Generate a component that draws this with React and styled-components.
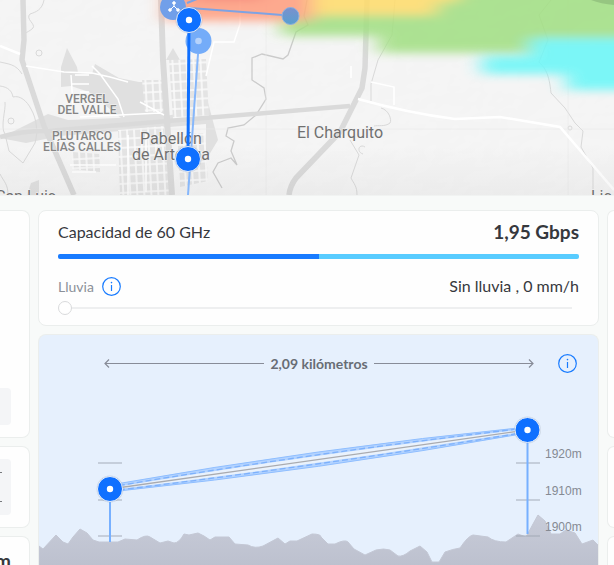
import React, { useState } from 'react';
import styled, { createGlobalStyle } from 'styled-components';

const GlobalStyle = createGlobalStyle`
  *, *::before, *::after { box-sizing: border-box; }
  body { margin: 0; background: #f8faf9; font-family: Lato, "Open Sans", sans-serif; color: #36383d; }
`;

const Page = styled.div`
  display: flex;
  flex-direction: column;
  height: 100vh;
  overflow: hidden;
`;

const MapView = styled.section`
  flex: none;
  overflow: hidden;
  background: #f3f3f3;

  svg { display: block; width: 100%; height: auto; }
`;

const MapLabel = styled.text`
  font-family: Roboto, sans-serif;
  font-size: ${(p) => (p.$district ? 12 : 16)}px;
  font-weight: ${(p) => (p.$district ? 500 : 400)};
  fill: ${(p) => (p.$district ? '#858585' : '#707070')};
  stroke: #f5f5f5;
  stroke-width: 1px;
  paint-order: stroke;
  text-anchor: ${(p) => p.$anchor || 'middle'};
`;

const Panel = styled.main`
  flex: 1;
  min-height: 0;
  display: grid;
  grid-template-columns: 30px minmax(0, 1fr) 7px;
  gap: 8px;
  padding-top: 14px;
  border-top: 1px solid #f1f3f2;
  background: #f8faf9;
`;

const Column = styled.div`
  display: flex;
  flex-direction: column;
  gap: 8px;
  min-width: 0;
  min-height: 0;
`;

const Card = styled.section`
  border: 1px solid #ebeeed;
  border-radius: 8px;
  background: #fefefe;
`;

const SideCard = styled(Card)`
  flex: ${(p) => (p.$fill ? '1' : 'none')};
  height: ${(p) => (p.$height ? `${p.$height}px` : 'auto')};
  display: flex;
  flex-direction: column;
  justify-content: ${(p) => (p.$center ? 'center' : p.$fill ? 'flex-start' : 'flex-end')};
  padding: 12px 0;
  border-left-width: ${(p) => (p.$side === 'left' ? 0 : 1)}px;
  border-right-width: ${(p) => (p.$side === 'left' ? 1 : 0)}px;
  border-bottom-width: ${(p) => (p.$fill ? 0 : 1)}px;
  border-radius: ${(p) => (p.$side === 'left' ? '0 8px 8px 0' : '8px 0 0 8px')};
  border-bottom-left-radius: ${(p) => (p.$fill ? '0' : null)};
  border-bottom-right-radius: ${(p) => (p.$fill ? '0' : null)};
  overflow: hidden;
`;

const Field = styled.div`
  display: flex;
  flex-direction: column;
  justify-content: space-between;
  width: 11px;
  height: ${(p) => p.$height}px;
  padding: 13px 0;
  border-radius: 0 4px 4px 0;
  background: #f4f5f7;
`;

const Dash = styled.span`
  width: 2px;
  height: 1px;
  background: #77797d;
`;

const Unit = styled.strong`
  display: flex;
  justify-content: flex-end;
  width: 11px;
  font-size: 19px;
  line-height: 24px;
`;

const CapacityCard = styled(Card)`
  display: flex;
  flex-direction: column;
  padding: 9px 19px 7px;
`;

const Row = styled.div`
  display: flex;
  align-items: center;
  justify-content: space-between;
  height: 24px;
`;

const Title = styled.h2`
  margin: 0;
  font-size: 16px;
  font-weight: 400;
  line-height: 24px;
`;

const Rate = styled.strong`
  font-size: 19px;
  font-weight: 700;
  line-height: 24px;
`;

const CapacityBar = styled.div`
  display: flex;
  height: 5px;
  margin: 10px 0 15px;
  border-radius: 2px;
  overflow: hidden;
`;

const Segment = styled.span`
  flex: 1;
  background: ${(p) => p.$color};
`;

const RainLabel = styled.div`
  display: flex;
  align-items: center;
  gap: 8px;
  font-size: 14px;
  color: #8b9099;
`;

const Value = styled.output`
  font-size: 16px;
  line-height: 24px;
`;

const InfoButton = styled.button`
  display: flex;
  padding: 0;
  border: 0;
  background: none;
  cursor: pointer;
`;

const Slider = styled.input`
  appearance: none;
  width: 100%;
  height: 20px;
  margin: 0;
  background: linear-gradient(#eeeff0, #eeeff0) center / calc(100% - 14px) 2px no-repeat;
  cursor: pointer;

  &::-webkit-slider-thumb {
    appearance: none;
    width: 14px;
    height: 14px;
    border: 1px solid #d9dadc;
    border-radius: 50%;
    background: #fff;
  }
`;

const ProfileCard = styled(Card)`
  flex: 1;
  min-height: 0;
  display: flex;
  flex-direction: column;
  border-bottom: 0;
  border-radius: 8px 8px 0 0;
  background: #e6f0fd;
  overflow: hidden;
`;

const ProfileHeader = styled.header`
  flex: none;
  display: flex;
  align-items: center;
  gap: 24px;
  padding: 19px 21px 0 65px;
`;

const Distance = styled.div`
  flex: 1;
  display: flex;
  align-items: center;
  gap: 6px;
  font-size: 14px;
  font-weight: 700;
  line-height: 18px;
  color: #686d75;
`;

const ArrowLine = styled.span`
  flex: 1;
  display: flex;
  align-items: center;
  flex-direction: ${(p) => (p.$right ? 'row' : 'row-reverse')};

  &::before {
    content: "";
    flex: 1;
    height: 1px;
    background: #888c98;
  }

  svg { flex: none; margin: ${(p) => (p.$right ? '0 0 0 -7px' : '0 -7px 0 0')}; }
`;

const ProfileChart = styled.svg`
  flex: none;
  display: block;
  width: 100%;
  height: auto;
`;

const AltitudeText = styled.text`
  font-family: "Liberation Sans", Arial, sans-serif;
  font-size: 12px;
  fill: #858a93;
`;

function Info({ label }) {
  return (
    <InfoButton type="button" aria-label={label}>
      <svg width="19" height="19" viewBox="0 0 19 19" fill="none" stroke="#187bff">
        <circle cx="9.5" cy="9.5" r="8.8" strokeWidth="1.2" />
        <path d="M9.5 8v6" strokeWidth="1.2" />
        <circle cx="9.5" cy="5.6" r=".8" fill="#187bff" stroke="none" />
      </svg>
    </InfoButton>
  );
}

function ArrowHead({ right }) {
  return (
    <svg width="8" height="9" viewBox="0 0 8 9" fill="none" stroke="#888c98" strokeWidth="1.2">
      <path d={right ? 'M3 .5l4 4-4 4' : 'M5 .5l-4 4 4 4'} />
    </svg>
  );
}

function Node({ x, y }) {
  return (
    <g transform={`translate(${x} ${y})`}>
      <circle r="13.5" fill="#8c98a8" opacity=".25" />
      <circle r="12.5" fill="#0f70ff" stroke="#e8effa" />
      <circle r="3.2" fill="#fff" />
    </g>
  );
}

function CoverageMap() {
  return (
    <MapView aria-label="Mapa">
      <svg viewBox="0 0 614 195" role="group">
        <defs>
          <pattern id="blocks" width="7" height="9" patternUnits="userSpaceOnUse" patternTransform="rotate(-3)">
            <rect width="7" height="9" fill="#e4e4e4" />
            <path d="M0 1h7M1 0v9" stroke="#fbfbfb" strokeWidth="1.6" />
          </pattern>
          <filter id="soft" x="-20%" y="-60%" width="140%" height="220%"><feGaussianBlur stdDeviation="10 5" /></filter>
          <filter id="relief" x="0" y="0" width="100%" height="100%">
            <feTurbulence type="fractalNoise" baseFrequency=".025 .035" numOctaves="3" seed="8" />
            <feDiffuseLighting surfaceScale="1.3" lightingColor="#fff"><feDistantLight azimuth="225" elevation="65" /></feDiffuseLighting>
          </filter>
          <linearGradient id="fade" x2="0" y2="1"><stop offset=".75" stopColor="#777" stopOpacity="0" /><stop offset="1" stopColor="#777" stopOpacity=".07" /></linearGradient>
          <linearGradient id="far" x2="0" y2="1"><stop stopColor="#7b90cd" /><stop offset="1" stopColor="#58a0d0" /></linearGradient>
        </defs>
        <rect width="614" height="195" fill="#f5f5f5" />
        <rect width="614" height="195" filter="url(#relief)" opacity=".11" />

        <g fill="#e0e0e0">
          <path d="M61 67l6-19 10 19 1 6 14 1 3-10 24 14 20 4 24 0 2 38-44-2-32-26-18-6-10 1z" />
          <path d="M0 138l20-10 28-14 20 6 98-4 40-8v16L60 136l-34 7z" />
          <path d="M27 195l4-12 8-3v15zM206 95l12 45-12 20zM166 60l7-12 7 12z" />
        </g>
        <path d="M142 80l22 0 3 32-22 0zM169 60l37-1 3 58-36 2zM118 130l46-4 6 69-50 0-1-30zM72 152l28 2 0 18-28-3zM177 135l28-2 3 48-28 6z" fill="url(#blocks)" />
        <g fill="none" stroke="#d9d9d9" strokeWidth="1">
          <path d="M44 0c-2 10-8 12-14 14-5 5 6 10 3 14-3 3-6 4-9 6" />
          <circle cx="39" cy="53" r="3" />
          <circle cx="11" cy="121" r="3" />
          <path d="M0 62c8 2 16 2 22 12M0 86c8 1 12 5 13 11 7-2 14 4 18 12 6 10 7 24 4 34l-12 20-14-12-4-17C0 127 6 110 5 102M0 174c4 8 8 10 8 21" />
          <path d="M395 0l-3 35-14 25-7 24v17M381 108c8 2 11 12 9 15-5 4-12 2-16 3M350 140l9 15-8 23c3 6 6 8 6 17M365 147c-6-4-9 5-2 7" />
          <path d="M307 0l-3 16 4 9-12 7-8 23-5 4-21-5-10 4v22l12 8 2 11-10 16-12 10-16 3-2 8 8 5-3 10 6 14-6-7-13 5-5 9 9 16" stroke="#cbcbcb" strokeWidth="1.3" />
          <path d="M551 0l-12 15 9 25-9 22c6 6 10 11 12 31l14 15 10 15 8 8-2 16 12 21v27" />
          <circle cx="570" cy="128" r="2" />
        </g>
        <g stroke="#e8e8e8" strokeWidth="1"><path d="M0 129h614M568 0v195M266 0v195" opacity=".6" /></g>
        <g fill="none" stroke="#dadada" strokeWidth="5.5" strokeLinejoin="round">
          <path d="M23 0l1 40-2 20 8 24 14 42 30 69" />
          <path d="M0 137q20-6 48-6l120-10 182-15" strokeWidth="4.5" />
          <path d="M161 0l2 60 9 135" strokeWidth="6" />
          <path d="M367 0l-2 68-3 20-22 44-44 46q-6 8-7 17" />
        </g>
        <g fill="none" stroke="#fff" strokeWidth="1.5">
          <path d="M0 46l20 8" strokeWidth="2.5" />
          <path d="M26 66l38 6 28 1 18 4 18 5M92 66l8 8 18 25 6 18M71 75l2 30M71 84h18M80 92h9M75 75h14M80 117l80-4M140 102l24 13M206 76l8-34h20l6-18V0M351 66v12" />
          <path d="M70 165h46M72 172h24M128 135v60M146 132v60" />
          <path d="M358 99q50 14 97 20l45-2 60 10 54 63" strokeWidth="2.5" />
          <path d="M371 82l23 5v18" />
        </g>
        <rect width="614" height="195" fill="url(#fade)" />

        <g filter="url(#soft)" opacity=".86">
          <path d="M274-30h390V70H560V53H378V36H282z" fill="#a1df82" />
          <path d="M300-30h158V2H436V15H310z" fill="#ffdc6b" />
          <path d="M166-30H312V21H166z" fill="#ff9d7e" />
          <path d="M195-30h65V-1h-65z" fill="#f26b62" />
          <path d="M530 38h134v52h-98V74h-84v-18h48z" fill="#67f7f8" />
        </g>
        <path d="M591 0q10 4 23 5V0z" fill="#96c681" />

        <MapLabel $district x="87" y="103">VERGEL</MapLabel>
        <MapLabel $district x="87" y="114">DEL VALLE</MapLabel>
        <MapLabel $district x="82" y="140">PLUTARCO</MapLabel>
        <MapLabel $district x="82" y="151">ELÍAS CALLES</MapLabel>
        <MapLabel x="171" y="144">Pabellón</MapLabel>
        <MapLabel x="171" y="160">de Arteaga</MapLabel>
        <MapLabel x="340" y="138">El Charquito</MapLabel>
        <MapLabel x="26" y="202">San Luis</MapLabel>
        <MapLabel x="591" y="202" $anchor="start">Lic</MapLabel>

        <path d="M187 3l10-4M190 8l92 7" stroke="#7ea3e3" strokeWidth="2" />
        <path d="M198 54l-10 141" stroke="#86b7fb" strokeWidth="2" />
        <circle cx="173" cy="7" r="13" fill="#719fe9" />
        <g fill="#fff" stroke="#fff">
          <path d="M170 10l4-4 4 4M174 3v3" fill="none" strokeWidth="1" />
          <circle cx="174" cy="3" r="1.3" /><circle cx="170" cy="10" r="1.3" /><circle cx="178" cy="10" r="1.3" />
        </g>
        <circle cx="290.5" cy="16" r="8.5" fill="url(#far)" stroke="#8eb0df" />
        <circle cx="198.5" cy="41" r="13" fill="#74acf9" />
        <circle cx="198.5" cy="41" r="3.3" fill="#b6d3fb" />
        <path d="M189 30l-1 120" stroke="#0f70ff" strokeWidth="3" />
        <Node x={189} y={20} />
        <Node x={188} y={159} />
      </svg>
    </MapView>
  );
}

const levels = [
  { y: 463, label: '1920m' },
  { y: 500, label: '1910m' },
  { y: 536, label: '1900m' },
];

function ElevationProfile() {
  return (
    <ProfileChart viewBox="39 373 559 200" role="group">
      <defs>
        <linearGradient id="ground" x2="0" y2="1"><stop stopColor="#c8ccd9" /><stop offset="1" stopColor="#b8bcca" /></linearGradient>
      </defs>
      <path
        d="M39 546l4 3 13-14 7 7 5 2 5-7 7-8 7 4 6 7 6 2h19l7-3 12 1q9-6 13-3l10 6 8-2 6 2q5 0 10-9l5 1 9-2 6 3 6 4 5-3h14l6 7 13 1q7 4 15 1l15-8 7 6 5-3h7l15-7q9 0 9 3l7 7h7q10-5 13-2l6 7 11 6 11-5q8-2 14 0l8 6q5 1 12-5l10-5 7 6 5 10h7l6-10q8-3 15-4 8-12 13-13l15 2q6 5 18 5l12-8 8 3 7-13 5-9 7 6 6 13h9l6-4 9 3 7 11 11-4 6 6v40H39z"
        fill="url(#ground)"
        stroke="#c4c8d5"
        strokeLinejoin="round"
      />
      {levels.map((l) => (
        <AltitudeText key={l.label} x="545" y={l.y - 5}>{l.label}</AltitudeText>
      ))}
      <g stroke="#9ea5b1" opacity=".6" strokeWidth="1.5">
        {levels.map((l) => (
          <path key={l.y} d={`M98 ${l.y}h24M516 ${l.y}h24`} />
        ))}
      </g>
      <g stroke="#77b0ff" strokeWidth="2"><path d="M110 500v42M527.500 440v94" /></g>
      <g fill="none">
        <path d="M110 485Q318 448 527 427L527 433Q319 470 110 492z" fill="#b3d3ff" stroke="#8fbeff" />
        <path d="M110 488Q318 453 527 429L527 431Q319 465 110 490z" fill="#eaf2fc" />
        <path d="M110 487Q318 452 527 428M110 491Q319 466 527 432" stroke="#7db1fc" strokeWidth="1.3" strokeDasharray="6 3" />
        <path d="M110 489L527 430" stroke="#a9abb0" strokeWidth="1.3" />
      </g>
      <Node x={110} y={489} />
      <Node x={527.5} y={430} />
    </ProfileChart>
  );
}

export default function App() {
  const [rain, setRain] = useState(0);
  return (
    <>
      <GlobalStyle />
      <Page>
        <CoverageMap />
        <Panel>
          <Column>
            <SideCard $side="left" $height={228}><Field $height={37} /></SideCard>
            <SideCard $side="left" $height={82} $center><Field $height={56}><Dash /><Dash /></Field></SideCard>
            <SideCard $side="left" $fill><Unit>m</Unit></SideCard>
          </Column>
          <Column>
            <CapacityCard>
              <Row>
                <Title>Capacidad de 60 GHz</Title>
                <Rate>1,95 Gbps</Rate>
              </Row>
              <CapacityBar>
                <Segment $color="#187bff" />
                <Segment $color="#58ccff" />
              </CapacityBar>
              <Row>
                <RainLabel>
                  <label htmlFor="rain">Lluvia</label>
                  <Info label="Información de lluvia" />
                </RainLabel>
                <Value htmlFor="rain">{rain === 0 ? 'Sin lluvia' : 'Lluvia'} , {rain} mm/h</Value>
              </Row>
              <Slider id="rain" type="range" min="0" max="100" value={rain} onChange={(e) => setRain(Number(e.target.value))} />
            </CapacityCard>
            <ProfileCard>
              <ProfileHeader>
                <Distance>
                  <ArrowLine><ArrowHead /></ArrowLine>
                  2,09 kilómetros
                  <ArrowLine $right><ArrowHead right /></ArrowLine>
                </Distance>
                <Info label="Información del perfil" />
              </ProfileHeader>
              <ElevationProfile />
            </ProfileCard>
          </Column>
          <Column>
            <SideCard $side="right" $height={228} />
            <SideCard $side="right" $height={82} />
            <SideCard $side="right" $fill />
          </Column>
        </Panel>
      </Page>
    </>
  );
}
